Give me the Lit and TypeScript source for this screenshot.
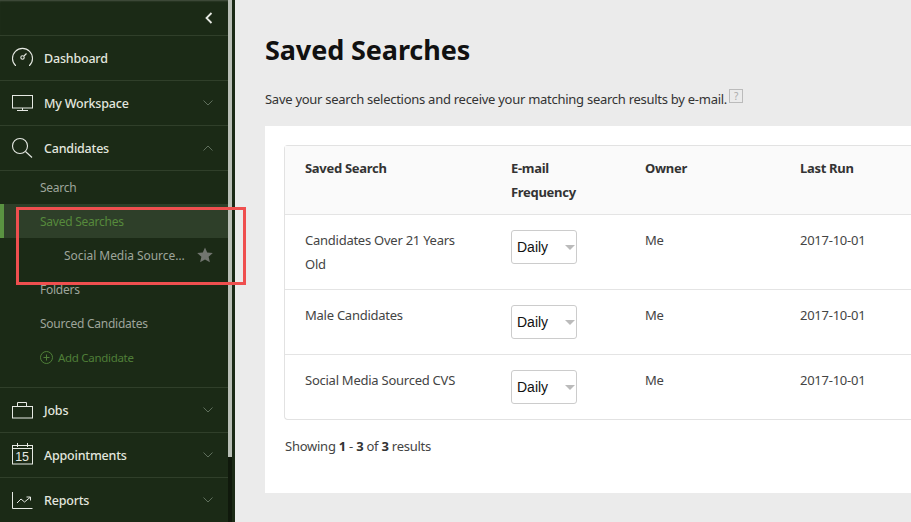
import { LitElement, html, css, svg } from "lit";
import { customElement } from "lit/decorators.js";

const chevDown = svg`<path d="M0.5 0.5 L5 5 L9.5 0.5" fill="none" stroke="#5f6f5c" stroke-width="1"/>`;
const chevUp = svg`<path d="M0.5 5.5 L5 1 L9.5 5.5" fill="none" stroke="#5f6f5c" stroke-width="1"/>`;

const icons: Record<string, unknown> = {
  dash: svg`<g fill="none" stroke="#e6e9e3" stroke-width="1.1"><path d="M4.5 18.5 A10 10 0 1 1 18.5 18.5" stroke-linecap="round"/><circle cx="11.5" cy="10.5" r="1.7"/><path d="M13 9 L15.5 6.5"/></g>`,
  mon: svg`<g fill="none" stroke="#e6e9e3" stroke-width="1"><rect x="1.5" y="3.5" width="20" height="12.5"/><path d="M11.5 16 V18 M6 18.5 H17"/></g>`,
  search: svg`<g fill="none" stroke="#e6e9e3" stroke-width="1.1"><circle cx="9" cy="9" r="7.5"/><path d="M14.5 14.5 L21 20.5"/></g>`,
  jobs: svg`<g fill="none" stroke="#e6e9e3" stroke-width="1"><rect x="1.5" y="7.5" width="20" height="11.5"/><path d="M6.5 7 V3.5 H15.5 V7"/></g>`,
  appt: svg`<g fill="none" stroke="#e6e9e3" stroke-width="1"><rect x="1.5" y="1.5" width="20" height="18.5"/><path d="M1.5 4.5 H21.5 M6.5 -1 V3 M16.5 -1 V3"/></g><text x="11" y="17" text-anchor="middle" font-family="Liberation Sans" font-size="12.5" fill="#e6e9e3">15</text>`,
  rep: svg`<g fill="none" stroke="#e6e9e3" stroke-width="1"><path d="M1.5 3 V19.5 H21.5"/><path d="M6 14 L10 10 L13.5 13 L19 8.5 M15.5 8 H19.5 V11.5"/></g>`,
};

@customElement("app-root")
export class AppRoot extends LitElement {
  static styles = css`
    :host { display: block; width: 911px; height: 522px; overflow: hidden; position: relative;
      font-family: "Noto Sans", sans-serif; }
    .page { display: flex; height: 522px; background: #ebebeb; }
    .side { width: 235px; flex: none; display: flex; background: #1b2a16; }
    .nav { width: 228px; flex: none; color: #d9ded6; }
    .track { width: 4px; flex: none; background: #10190c; }
    .thumb { height: 457px; background: #b9bfb6; }
    .collapse { height: 35px; display: flex; align-items: center; justify-content: flex-end; padding-right: 15px; border-bottom: 1px solid #303f2a; box-shadow: inset 0 2px 2px -1px rgba(255, 255, 255, 0.2); }
    .item { height: 44px; display: flex; align-items: center; border-bottom: 1px solid #303f2a; font-size: 12.5px; font-weight: 500; color: #e2e6df; letter-spacing: -0.2px; }
    .item:last-child { border-bottom: 0; }
    .ico { width: 23px; height: 23px; margin-left: 11px; margin-right: 10px; flex: none; overflow: visible; }
    .item span { flex: 1; }
    .chev { width: 10px; height: 6px; margin-right: 15px; flex: none; }
    .sub { height: 216px; border-bottom: 1px solid #303f2a; font-size: 12px; color: #9ea59b; letter-spacing: -0.25px; }
    .sub div { height: 34px; display: flex; align-items: center; padding-left: 40px; }
    .sub .first { height: 33px; }
    .sub .on { background: #2e3f29; color: #568a3c; border-left: 4px solid #5a9341; padding-left: 36px; }
    .sub .child { padding-left: 64px; justify-content: space-between; padding-right: 15px; letter-spacing: -0.05px; }
    .sub .add { color: #4f7f38; gap: 5px; font-size: 11.5px; letter-spacing: -0.3px; }
    .sub svg { flex: none; }
    main { flex: 1; min-width: 0; padding: 0 0 0 30px; overflow: hidden; }
    h1 { margin: 0; padding-top: 32px; font-size: 27px; line-height: 36px; font-weight: 700; color: #111; letter-spacing: -0.1px; }
    .desc { margin: 19px 0 0; font-size: 13px; line-height: 24px; height: 39px; color: #333; letter-spacing: -0.27px; display: flex; align-items: flex-start; }
    .help { width: 12px; height: 12px; border: 1px solid #bbb; margin: 2px 0 0 2px; font-size: 10px; line-height: 12px; text-align: center; color: #aaa; letter-spacing: 0; }
    .card { background: #fff; width: 700px; height: 367px; padding: 19px; box-sizing: border-box; color: #444; font-size: 13px; letter-spacing: -0.25px; }
    .table { width: 720px; border: 1px solid #e2e2e2; border-right: 0; border-radius: 4px 0 0 4px; }
    .row { display: grid; grid-template-columns: 206px 134px 155px 1fr; padding: 13px 0 13px 20px; line-height: 24px; border-bottom: 1px solid #e4e4e4; }
    .row:last-child { border-bottom: 0; }
    .head { background: #fafafa; font-weight: 700; color: #333; padding: 10px 0 10px 20px; letter-spacing: -0.3px; }
    .name { padding-right: 40px; }
    .sel { width: 66px; height: 34px; margin: 2px 0; box-sizing: border-box; border: 1px solid #ccc; border-radius: 3px; font: 14px/32px "Liberation Sans", sans-serif; color: #111; padding-left: 5px; position: relative; letter-spacing: 0; }
    .sel::after { content: ""; position: absolute; right: 1px; top: 14px; border: 5px solid transparent; border-top: 5px solid #bbb; border-bottom: 0; }
    .foot { margin: 14px 0 0 1px; line-height: 24px; }
    .foot b { color: #333; }
    .mark { position: absolute; left: 16px; top: 207px; width: 230px; height: 78px; box-sizing: border-box; border: 3px solid #ef4f4f; pointer-events: none; }
  `;

  private item(icon: string, label: string, chev?: "up" | "down") {
    return html`<div class="item">
      <svg class="ico" viewBox="0 0 23 23">${icons[icon]}</svg>
      <span>${label}</span>
      ${chev ? html`<svg class="chev" viewBox="0 0 10 6">${chev === "up" ? chevUp : chevDown}</svg>` : ""}
    </div>`;
  }

  private row(name: string) {
    return html`<div class="row">
      <div class="name">${name}</div>
      <div><div class="sel">Daily</div></div>
      <div>Me</div>
      <div>2017-10-01</div>
    </div>`;
  }

  render() {
    return html`<div class="page">
      <aside class="side">
        <nav class="nav">
          <div class="collapse"><svg width="8" height="12" viewBox="0 0 8 12"><path d="M6.5 1 L1.5 6 L6.5 11" fill="none" stroke="#e6e9e3" stroke-width="1.8"/></svg></div>
          ${this.item("dash", "Dashboard")}
          ${this.item("mon", "My Workspace", "down")}
          ${this.item("search", "Candidates", "up")}
          <div class="sub">
            <div class="first">Search</div>
            <div class="on">Saved Searches</div>
            <div class="child">Social Media Source…
              <svg width="16" height="16" viewBox="0 0 16 16"><path d="M8 0.5 L10.2 5.6 L15.8 6.1 L11.6 9.8 L12.9 15.3 L8 12.4 L3.1 15.3 L4.4 9.8 L0.2 6.1 L5.8 5.6 Z" fill="#71756f"/></svg>
            </div>
            <div>Folders</div>
            <div>Sourced Candidates</div>
            <div class="add"><svg width="13" height="13" viewBox="0 0 13 13"><g fill="none" stroke="#4f7f38"><circle cx="6.5" cy="6.5" r="6"/><path d="M6.5 3.5 V9.5 M3.5 6.5 H9.5"/></g></svg>Add Candidate</div>
          </div>
          ${this.item("jobs", "Jobs", "down")}
          ${this.item("appt", "Appointments", "down")}
          ${this.item("rep", "Reports", "down")}
        </nav>
        <div class="track"><div class="thumb"></div></div>
      </aside>
      <main>
        <h1>Saved Searches</h1>
        <p class="desc">Save your search selections and receive your matching search results by e-mail.<span class="help">?</span></p>
        <div class="card">
          <div class="table">
            <div class="row head"><div>Saved Search</div><div>E-mail<br />Frequency</div><div>Owner</div><div>Last Run</div></div>
            ${this.row("Candidates Over 21 Years Old")}
            ${this.row("Male Candidates")}
            ${this.row("Social Media Sourced CVS")}
          </div>
          <div class="foot">Showing <b>1</b> - <b>3</b> of <b>3</b> results</div>
        </div>
      </main>
    </div>
    <div class="mark"></div>`;
  }
}
